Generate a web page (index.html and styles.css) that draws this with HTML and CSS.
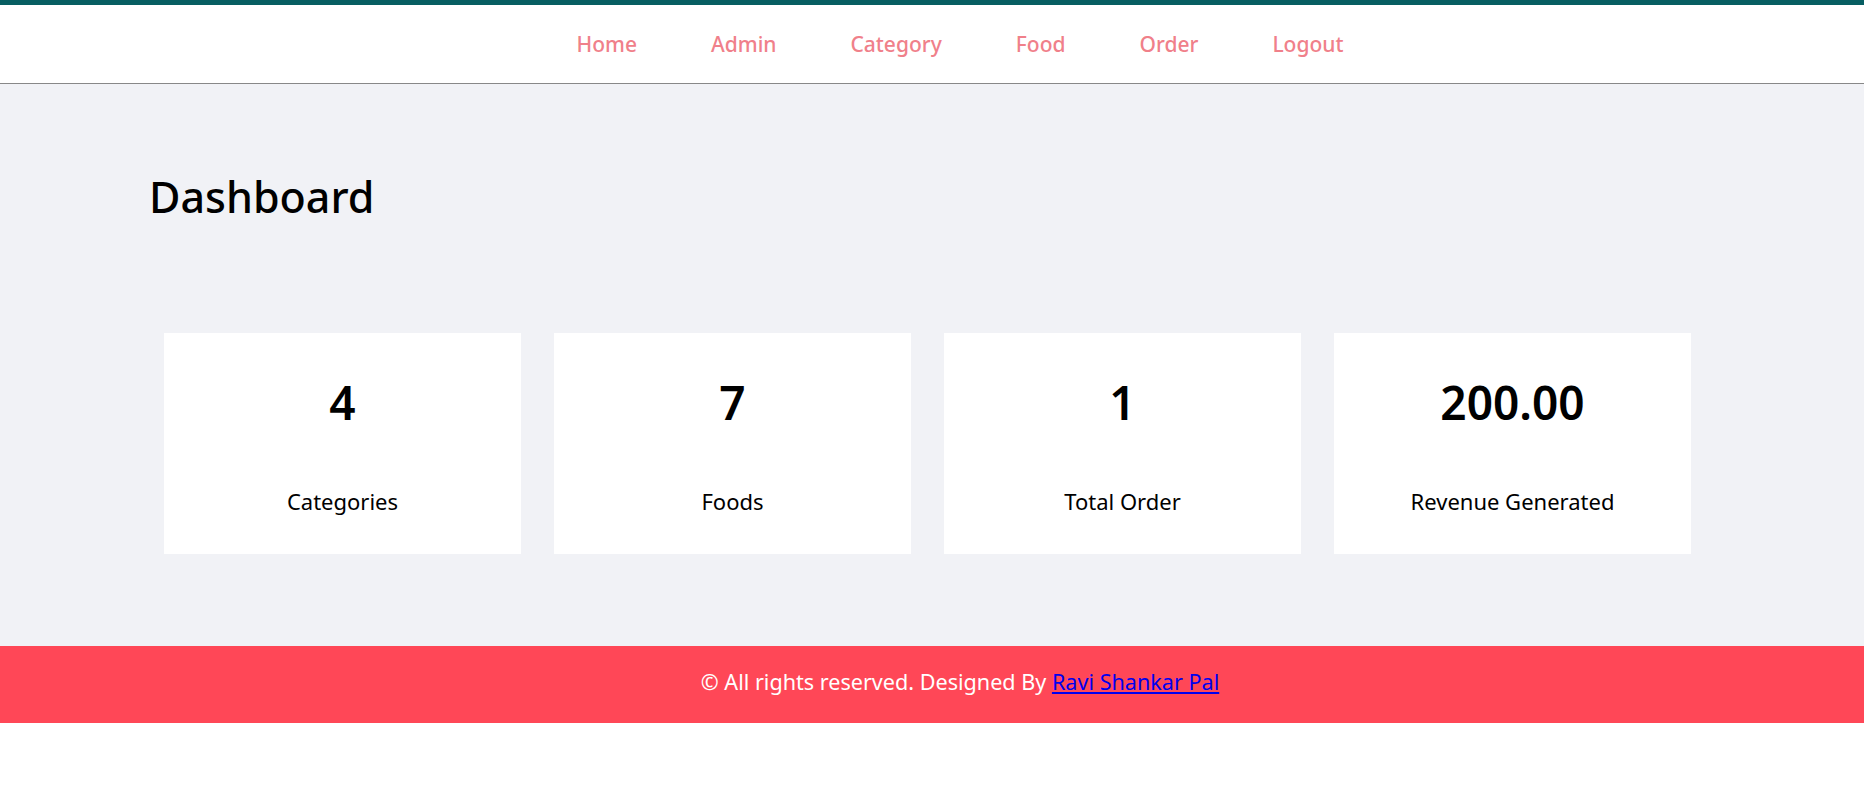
FILE: index.html
```html
<!DOCTYPE html>
<html lang="en">
<head>
<meta charset="utf-8">
<title>Dashboard</title>
<link rel="stylesheet" href="styles.css">
</head>
<body>
<header class="menu">
  <nav class="nav">
    <a href="#">Home</a>
    <a href="#">Admin</a>
    <a href="#">Category</a>
    <a href="#">Food</a>
    <a href="#">Order</a>
    <a href="#">Logout</a>
  </nav>
</header>
<main class="main-content">
  <h1 class="title">Dashboard</h1>
  <div class="cards">
    <div class="card"><div class="num">4</div><div class="label">Categories</div></div>
    <div class="card"><div class="num">7</div><div class="label">Foods</div></div>
    <div class="card"><div class="num">1</div><div class="label">Total Order</div></div>
    <div class="card"><div class="num">200.00</div><div class="label">Revenue Generated</div></div>
  </div>
</main>
<footer class="footer">
  <p class="copy">© All rights reserved. Designed By <a href="#">Ravi Shankar Pal</a></p>
</footer>
</body>
</html>
```
FILE: styles.css
```css
* { box-sizing: border-box; }
body {
  margin: 0;
  font-family: "Noto Sans", "Open Sans", sans-serif;
  color: #000;
  background: #fff;
}
.menu {
  border-top: 5px solid #075e62;
  border-bottom: 1px solid #888;
  background: #fff;
}
.nav {
  display: flex;
  justify-content: center;
  gap: 74px;
  padding: 29px 0 28px 56px;
  font-size: 21px;
  line-height: 1;
}
.nav a {
  color: #f0808a;
  text-decoration: none;
  font-weight: 500;
}
.main-content {
  background: #f1f2f6;
  padding: 91px 149px 92px;
}
.title {
  margin: 0;
  font-size: 43px;
  line-height: 1;
  font-weight: 500;
}
.cards {
  display: flex;
  gap: 33px;
  margin-top: 115px;
  padding-left: 15px;
}
.card {
  width: 357px;
  height: 221px;
  background: #fff;
  display: flex;
  flex-direction: column;
  align-items: center;
  padding-top: 46px;
}
.num {
  font-size: 46px;
  line-height: 1;
  font-weight: 600;
}
.label {
  margin-top: 65px;
  font-size: 22px;
  line-height: 1;
}
.footer {
  background: #ff4757;
  color: #fff;
  padding: 25px 0 30px 56px;
  text-align: center;
}
.copy {
  margin: 0;
  font-size: 21.6px;
  line-height: 22px;
}
.copy a { color: #0000ee; }
```
